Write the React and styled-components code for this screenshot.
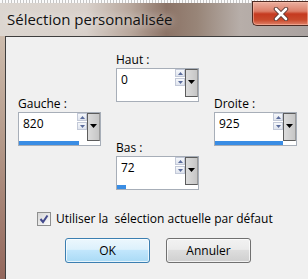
import React from 'react'
import styled, { createGlobalStyle } from 'styled-components'

const GlobalStyle = createGlobalStyle`
  html, body {
    margin: 0;
    padding: 0;
    background: #f0f0f0;
  }
  body {
    font-family: 'Open Sans', 'Noto Sans', sans-serif;
    color: #000;
  }
`

const Window = styled.div`
  width: 308px;
  height: 279px;
  overflow: hidden;
  display: flex;
  flex-direction: column;
  background: #f0f0f0;
`

const TitleBar = styled.div`
  position: relative;
  flex: none;
  height: 36px;
  display: flex;
  align-items: flex-start;
  justify-content: space-between;
  background: linear-gradient(
    90deg,
    #dcd6d0 0%,
    #d8d0ca 28%,
    #b9a89d 42%,
    #8c7366 54%,
    #988578 64%,
    #b7aea9 78%,
    #aaa2a0 100%
  );
  &::before {
    content: '';
    position: absolute;
    left: 0;
    right: 0;
    top: 0;
    height: 3px;
    background: repeating-linear-gradient(90deg, #fafafa 0 2px, #c6c6c6 2px 3px);
  }
`

const Title = styled.div`
  margin: 10px 0 0 7px;
  font-size: 15px;
  line-height: 18px;
  color: #111;
  text-shadow: 0 0 8px rgba(255, 255, 255, 0.9);
`

const CloseButton = styled.div`
  position: relative;
  width: 56px;
  height: 25px;
  margin-top: 1px;
  box-sizing: border-box;
  border: 1px solid #4d2a22;
  border-right: none;
  border-radius: 0 0 0 5px;
  background: linear-gradient(
    180deg,
    #eab0a0 0%,
    #dc7f69 40%,
    #c53a20 52%,
    #c94a2c 78%,
    #e0826a 100%
  );
  box-shadow: inset 0 0 0 1px rgba(255, 200, 180, 0.5);
  display: flex;
  align-items: center;
  justify-content: center;
`

const Body = styled.div`
  flex: 1;
  display: flex;
`

const SideFrame = styled.div`
  width: 5px;
  flex: none;
  background: linear-gradient(180deg, #cdbcad 0%, #b39888 45%, #93675c 100%);
`

const Client = styled.div`
  flex: 1;
  border-top: 1px solid #3e3e3e;
  border-left: 1px solid #3e3e3e;
  background: #f0f0f0;
  padding: 15px 0 0 12px;
  font-size: 12px;
`

const FieldGrid = styled.div`
  display: grid;
  grid-template-columns: repeat(3, 83px);
  grid-template-rows: repeat(3, 44px);
  column-gap: 15px;
  align-items: start;
`

const Field = styled.div`
  grid-column: ${(p) => p.$col};
  grid-row: ${(p) => p.$row};
`

const Label = styled.div`
  line-height: 15px;
  margin-bottom: 1px;
`

const SpinBox = styled.div`
  box-sizing: border-box;
  height: 34px;
  border: 1px solid #a7aeb8;
  background: #fff;
  display: flex;
  flex-direction: column;
`

const SpinRow = styled.div`
  height: 28px;
  display: flex;
`

const Value = styled.div`
  flex: 1;
  padding: 3px 0 0 4px;
  line-height: 15px;
`

const Arrows = styled.div`
  width: 10px;
  display: flex;
  flex-direction: column;
  gap: 1px;
`

const ArrowButton = styled.div`
  height: 8px;
  box-sizing: border-box;
  border: 1px solid #c3c9d8;
  background: linear-gradient(180deg, #f6f8fb, #dfe4ee);
  display: flex;
  align-items: center;
  justify-content: center;
`

const DropButton = styled.div`
  width: 13px;
  box-sizing: border-box;
  border: 1px solid #5c5c5c;
  border-right-color: #9a9a9a;
  background: linear-gradient(90deg, #dcdcdc, #c6c6c6);
  display: flex;
  justify-content: center;
  padding-top: 10px;
`

const Track = styled.div`
  height: 4px;
  margin-right: 13px;
  margin-top: auto;
`

const Fill = styled.div`
  height: 100%;
  background: #3a8de4;
`

const CheckRow = styled.label`
  display: flex;
  align-items: center;
  gap: 5px;
  margin: 28px 0 0 19px;
  height: 14px;
  line-height: 14px;
`

const CheckBox = styled.span`
  width: 14px;
  height: 14px;
  box-sizing: border-box;
  border: 1px solid #8e8f8f;
  background: linear-gradient(135deg, #d6d6d6, #fdfdfd);
  display: flex;
  align-items: center;
  justify-content: center;
`

const ButtonRow = styled.div`
  display: flex;
  gap: 16px;
  margin: 12px 0 0 47px;
`

const Button = styled.div`
  width: 85px;
  height: 25px;
  box-sizing: border-box;
  border-radius: 3px;
  display: flex;
  align-items: center;
  justify-content: center;
  border: 1px solid ${(p) => (p.$primary ? '#3c7fb1' : '#707070')};
  background: ${(p) =>
    p.$primary
      ? 'linear-gradient(180deg, #ecf7fd 0%, #dcf1fc 45%, #c1e6fc 50%, #a9daf5 100%)'
      : 'linear-gradient(180deg, #f2f2f2 0%, #ebebeb 45%, #dddddd 50%, #cfcfcf 100%)'};
  box-shadow: inset 0 0 0 1px rgba(255, 255, 255, 0.7);
`

const fields = [
  { label: 'Haut :', value: 0, max: 925, col: 2, row: 1 },
  { label: 'Gauche :', value: 820, max: 925, col: 1, row: 2 },
  { label: 'Droite :', value: 925, max: 925, col: 3, row: 2 },
  { label: 'Bas :', value: 72, max: 540, col: 2, row: 3 },
]

function Triangle({ up, color }) {
  return (
    <svg width="5" height="3" viewBox="0 0 5 3">
      <path d={up ? 'M0 3 L2.5 0 L5 3 Z' : 'M0 0 L5 0 L2.5 3 Z'} fill={color} />
    </svg>
  )
}

function SpinField({ label, value, max, col, row }) {
  return (
    <Field $col={col} $row={row}>
      <Label>{label}</Label>
      <SpinBox>
        <SpinRow>
          <Value>{value}</Value>
          <Arrows>
            <ArrowButton>
              <Triangle up color="#5b6c9c" />
            </ArrowButton>
            <ArrowButton>
              <Triangle color="#5b6c9c" />
            </ArrowButton>
          </Arrows>
          <DropButton>
            <svg width="7" height="4" viewBox="0 0 7 4">
              <path d="M0 0 L7 0 L3.5 4 Z" fill="#000" />
            </svg>
          </DropButton>
        </SpinRow>
        <Track>
          <Fill style={{ width: `${(value / max) * 100}%` }} />
        </Track>
      </SpinBox>
    </Field>
  )
}

export default function App() {
  return (
    <>
      <GlobalStyle />
      <Window>
        <TitleBar>
          <Title>Sélection personnalisée</Title>
          <CloseButton>
            <svg width="16" height="14" viewBox="0 0 16 14">
              <path d="M3 2 L13 12 M13 2 L3 12" stroke="#5a3a34" strokeWidth="4.5" strokeLinecap="round" />
              <path d="M3 2 L13 12 M13 2 L3 12" stroke="#fff" strokeWidth="2.6" strokeLinecap="round" />
            </svg>
          </CloseButton>
        </TitleBar>
        <Body>
          <SideFrame />
          <Client>
            <FieldGrid>
              {fields.map((f) => (
                <SpinField key={f.label} {...f} />
              ))}
            </FieldGrid>
            <CheckRow>
              <CheckBox>
                <svg width="10" height="10" viewBox="0 0 10 10">
                  <path d="M1.5 5 L4 8 L8.5 1.5" stroke="#434a8c" strokeWidth="2" fill="none" />
                </svg>
              </CheckBox>
              <span>Utiliser la&nbsp; sélection actuelle par défaut</span>
            </CheckRow>
            <ButtonRow>
              <Button $primary>OK</Button>
              <Button>Annuler</Button>
            </ButtonRow>
          </Client>
        </Body>
      </Window>
    </>
  )
}
